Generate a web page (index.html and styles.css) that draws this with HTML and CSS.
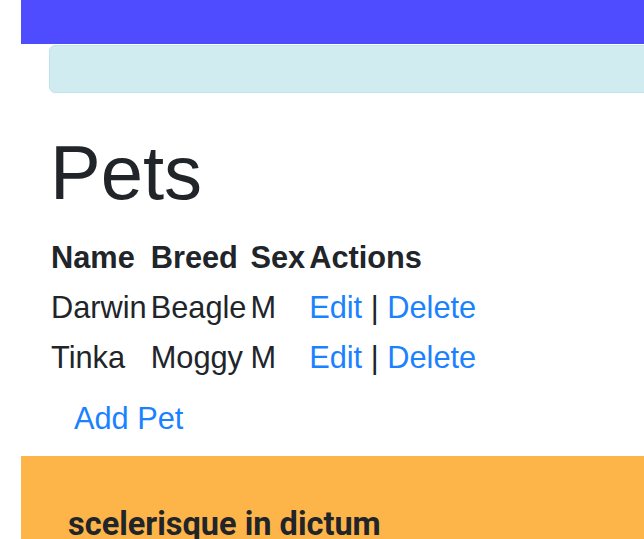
FILE: index.html
```html
<!DOCTYPE html>
<html>
<head>
<meta charset="utf-8">
<link rel="stylesheet" href="styles.css">
</head>
<body>
<div class="page">
  <header class="topbar"></header>
  <main class="content">
    <div class="alert"></div>
    <h1 class="title">Pets</h1>
    <table class="pets">
      <thead>
        <tr><th>Name</th><th>Breed</th><th>Sex</th><th>Actions</th></tr>
      </thead>
      <tbody>
        <tr><td>Darwin</td><td>Beagle</td><td>M</td><td><a href="#">Edit</a> | <a href="#">Delete</a></td></tr>
        <tr><td>Tinka</td><td>Moggy</td><td>M</td><td><a href="#">Edit</a> | <a href="#">Delete</a></td></tr>
      </tbody>
    </table>
    <p class="add"><a href="#">Add Pet</a></p>
  </main>
  <footer class="footer">
    <h3 class="footer-title">scelerisque in dictum</h3>
  </footer>
</div>
</body>
</html>
```
FILE: styles.css
```css
html, body {
  margin: 0;
  padding: 0;
  overflow: hidden;
}
body {
  font-family: "Liberation Sans", Arial, sans-serif;
  color: #212529;
  background: #fff;
}
.page {
  margin-left: 21px;
  width: 900px;
}
.topbar {
  height: 44px;
  background: #4f4cff;
}
.content {
  padding: 1px 0 0 28px;
}
.alert {
  height: 46px;
  background: #d1ecf1;
  border: 1px solid #bee5eb;
  border-radius: 6px;
}
.title {
  margin: 34px 0 0 0;
  padding-left: 1px;
  font-size: 76px;
  font-weight: 400;
  line-height: 1.2;
}
.pets {
  margin-top: 13px;
  border-spacing: 2px 4px;
  font-size: 30.75px;
  line-height: 46px;
  margin-left: -1px;
}
.pets th, .pets td {
  padding: 0 1px;
  text-align: left;
}
.pets th {
  font-weight: 700;
}
a {
  color: #1a82ff;
  text-decoration: none;
}
.add {
  margin: 11px 0 0 0;
  padding-left: 25px;
  font-size: 30.75px;
  line-height: 45px;
  height: 60px;
}
.footer {
  background: #fdb54a;
  height: 120px;
  padding: 48px 0 0 47px;
  box-sizing: border-box;
}
.footer-title {
  margin: 0;
  font-family: Roboto, "Liberation Sans", sans-serif;
  font-weight: 700;
  font-size: 32.5px;
  line-height: 40px;
}
```
